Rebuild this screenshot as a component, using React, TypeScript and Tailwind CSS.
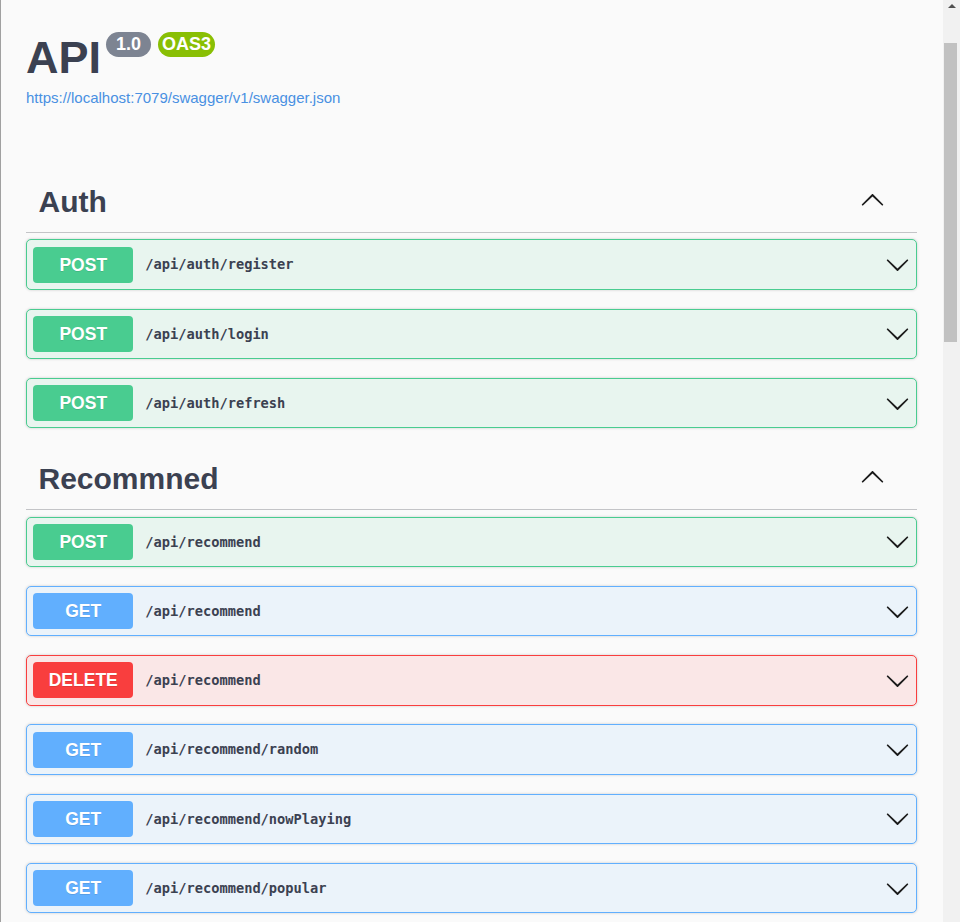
import React from "react";

type Method = "POST" | "GET" | "DELETE";

const styles: Record<Method, { row: string; badge: string }> = {
  POST: { row: "bg-[#e8f5ef] border-[#49cc90]", badge: "bg-[#49cc90]" },
  GET: { row: "bg-[#ebf3fa] border-[#61affe]", badge: "bg-[#61affe]" },
  DELETE: { row: "bg-[#fae7e7] border-[#f93e3e]", badge: "bg-[#f93e3e]" },
};

const CHEVRON =
  "M17.418 6.109c.272-.268.709-.268.979 0s.271.701 0 .969l-7.908 7.83c-.27.268-.707.268-.979 0l-7.908-7.83c-.27-.268-.27-.701 0-.969.271-.268.709-.268.979 0L10 13.25l7.418-7.141z";

function Chevron({ up }: { up?: boolean }) {
  return (
    <svg
      viewBox="0 0 20 20"
      width={25}
      height={25}
      className={up ? "rotate-180 shrink-0" : "shrink-0"}
      fill="#1b1b1b"
    >
      <path d={CHEVRON} />
    </svg>
  );
}

function Op({ method, path }: { method: Method; path: string }) {
  const s = styles[method];
  return (
    <div
      className={`flex items-center h-[50.5px] mb-[18.75px] border rounded-[5px] px-[6.25px] shadow-[0_0_3px_rgba(0,0,0,0.19)] ${s.row}`}
    >
      <div
        className={`w-[100px] h-[36px] rounded-[4px] flex items-center justify-center text-white font-bold text-[17.5px] [text-shadow:0_1px_0_rgba(0,0,0,0.1)] ${s.badge}`}
      >
        {method}
      </div>
      <div className="ml-[12px] flex-1 text-[13.7px] font-bold text-[#3b4151] font-['DejaVu_Sans_Mono',monospace]">
        {path}
      </div>
      <Chevron />
    </div>
  );
}

function Section({
  title,
  ops,
  className,
}: {
  title: string;
  ops: { method: Method; path: string }[];
  className?: string;
}) {
  return (
    <div className={className}>
      <div className="flex items-start pl-[12.5px] pr-[32px] pt-[12px] pb-[13px] border-b border-[#c3c4c7]">
        <div className="flex-1 text-[30px] leading-[34px] font-bold text-[#3b4151]">
          {title}
        </div>
        <div className="mt-[3px]">
          <Chevron up />
        </div>
      </div>
      <div className="mt-[6.5px]">
        {ops.map((o, i) => (
          <Op key={i} method={o.method} path={o.path} />
        ))}
      </div>
    </div>
  );
}

export default function App() {
  return (
    <div className="flex w-[960px] h-[922px] overflow-hidden border-l border-[#a0a0a0] font-['Liberation_Sans',Arial,sans-serif]">
      <div className="flex-1 bg-[#fafafa] pl-[25px] pr-[26px] pt-[32.4px] overflow-hidden">
        <div className="flex items-start h-[52px]">
          <div className="text-[45px] leading-[52px] font-bold text-[#3b4151]">API</div>
          <div className="ml-[5px] h-[25px] rounded-full bg-[#7d8492] px-[10px] text-white font-bold text-[18px] leading-[25px]">
            1.0
          </div>
          <div className="ml-[7px] h-[25px] rounded-full bg-[#89bf04] px-[4px] text-white font-bold text-[18px] leading-[25px]">
            OAS3
          </div>
        </div>
        <div className="mt-[4.5px] text-[15px] leading-[18px] text-[#4990e2]">
          https://localhost:7079/swagger/v1/swagger.json
        </div>
        <Section
          className="mt-[66px]"
          title="Auth"
          ops={[
            { method: "POST", path: "/api/auth/register" },
            { method: "POST", path: "/api/auth/login" },
            { method: "POST", path: "/api/auth/refresh" },
          ]}
        />
        <Section
          className="mt-[21.75px]"
          title="Recommned"
          ops={[
            { method: "POST", path: "/api/recommend" },
            { method: "GET", path: "/api/recommend" },
            { method: "DELETE", path: "/api/recommend" },
            { method: "GET", path: "/api/recommend/random" },
            { method: "GET", path: "/api/recommend/nowPlaying" },
            { method: "GET", path: "/api/recommend/popular" },
          ]}
        />
      </div>
      <div className="w-[17px] h-full bg-[#f1f1f1] flex flex-col items-start">
        <div className="w-full h-[17px] flex justify-center pt-[4px]">
          <div className="w-0 h-0 border-l-[4px] border-r-[4px] border-b-[4px] border-l-transparent border-r-transparent border-b-[#505050]" />
        </div>
        <div className="ml-[1px] mt-[26px] w-[13px] h-[299px] bg-[#c1c1c1]" />
      </div>
    </div>
  );
}
